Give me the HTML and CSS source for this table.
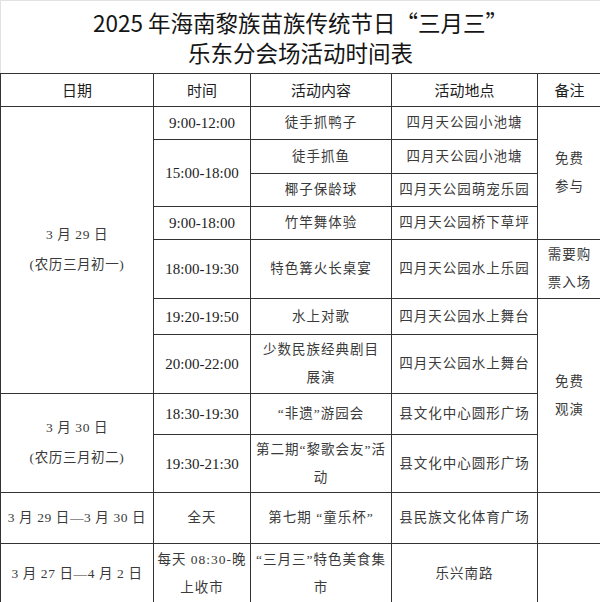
FILE: index.html
```html
<!DOCTYPE html>
<html lang="zh-CN">
<head>
<meta charset="utf-8">
<title>乐东分会场活动时间表</title>
<link rel="stylesheet" href="styles.css">
</head>
<body>
<div class="page">
  <div class="title">
    <div>2025 年海南黎族苗族传统节日“三月三”</div>
    <div>乐东分会场活动时间表</div>
  </div>
  <table class="sched">
    <colgroup>
      <col class="c1"><col class="c2"><col class="c3"><col class="c4"><col class="c5">
    </colgroup>
    <thead>
      <tr class="h33"><th>日期</th><th>时间</th><th>活动内容</th><th>活动地点</th><th>备注</th></tr>
    </thead>
    <tbody>
      <tr class="h33">
        <td rowspan="7" class="d">3 月 29 日<br>(农历三月初一)</td>
        <td class="t">9:00-12:00</td>
        <td>徒手抓鸭子</td>
        <td>四月天公园小池塘</td>
        <td rowspan="4" class="n">免费<br>参与</td>
      </tr>
      <tr class="h34">
        <td rowspan="2" class="t">15:00-18:00</td>
        <td>徒手抓鱼</td>
        <td>四月天公园小池塘</td>
      </tr>
      <tr class="h33">
        <td>椰子保龄球</td>
        <td>四月天公园萌宠乐园</td>
      </tr>
      <tr class="h33">
        <td class="t">9:00-18:00</td>
        <td>竹竿舞体验</td>
        <td>四月天公园桥下草坪</td>
      </tr>
      <tr class="h59">
        <td class="t">18:00-19:30</td>
        <td>特色篝火长桌宴</td>
        <td>四月天公园水上乐园</td>
        <td class="n">需要购<br>票入场</td>
      </tr>
      <tr class="h36">
        <td class="t">19:20-19:50</td>
        <td>水上对歌</td>
        <td>四月天公园水上舞台</td>
        <td rowspan="4" class="n">免费<br>观演</td>
      </tr>
      <tr class="h59">
        <td class="t">20:00-22:00</td>
        <td>少数民族经典剧目<br>展演</td>
        <td>四月天公园水上舞台</td>
      </tr>
      <tr class="h41">
        <td rowspan="2" class="d">3 月 30 日<br>(农历三月初二)</td>
        <td class="t">18:30-19:30</td>
        <td>“非遗”游园会</td>
        <td>县文化中心圆形广场</td>
      </tr>
      <tr class="h58">
        <td class="t">19:30-21:30</td>
        <td>第二期“黎歌会友”活<br>动</td>
        <td>县文化中心圆形广场</td>
      </tr>
      <tr class="h51">
        <td class="d">3 月 29 日—3 月 30 日</td>
        <td>全天</td>
        <td>第七期 “童乐杯”</td>
        <td>县民族文化体育广场</td>
        <td></td>
      </tr>
      <tr class="h60">
        <td class="d">3 月 27 日—4 月 2 日</td>
        <td>每天 08:30-晚<br>上收市</td>
        <td>“三月三”特色美食集<br>市</td>
        <td>乐兴南路</td>
        <td></td>
      </tr>
    </tbody>
  </table>
</div>
</body>
</html>
```

FILE: styles.css
```css
html, body {
  margin: 0;
  padding: 0;
  background: #ffffff;
  overflow: hidden;
}

.page {
  width: 600px;
  height: 602px;
  overflow: hidden;
}

.title {
  box-sizing: border-box;
  height: 73px;
  padding-top: 6px;
  border-top: 1px solid #e2e2e2;
  border-left: 1px solid #e2e2e2;
  text-align: center;
  font-family: "Noto Sans CJK SC", "Noto Sans", sans-serif;
  font-size: 22.5px;
  line-height: 30px;
  color: #151515;
}

.sched {
  border-collapse: collapse;
  table-layout: fixed;
  width: 601px;
}

.c1 { width: 153px; }
.c2 { width: 97px; }
.c3 { width: 141px; }
.c4 { width: 146px; }
.c5 { width: 64px; }

.sched th,
.sched td {
  border: 1px solid #333333;
  padding: 0;
  text-align: center;
  vertical-align: middle;
  white-space: nowrap;
}

.sched th {
  font-family: "Noto Sans CJK SC", "Noto Sans", sans-serif;
  font-weight: normal;
  font-size: 15px;
  line-height: 20px;
  color: #1e1e1e;
}

.sched td {
  font-family: "Liberation Serif", "Noto Sans CJK SC", serif;
  font-size: 13.5px;
  letter-spacing: 1px;
  line-height: 28px;
  color: #3a3a3a;
}

.sched td.t {
  font-size: 15px;
  letter-spacing: 0;
  color: #222222;
}

.sched td.d {
  line-height: 30px;
  letter-spacing: 0.6px;
}

.h33 > * { height: 32px; }
.h34 > * { height: 33px; }
.h36 > * { height: 35px; }
.h41 > * { height: 40px; }
.h51 > * { height: 50px; }
.h58 > * { height: 57px; }
.h59 > * { height: 58px; }
.h60 > * { height: 59px; }
```
